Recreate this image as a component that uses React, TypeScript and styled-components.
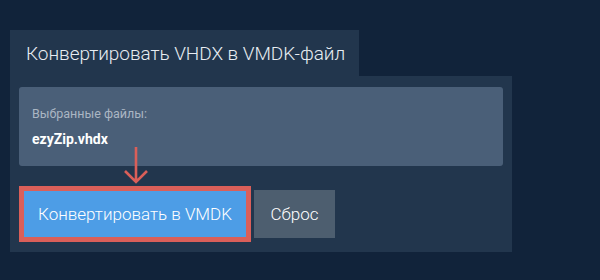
import React from 'react';
import styled, { createGlobalStyle } from 'styled-components';

const GlobalStyle = createGlobalStyle`
  body {
    margin: 0;
    background: #11233a;
    font-family: Roboto, "Noto Sans", sans-serif;
  }
`;

const Page = styled.div`
  padding: 30px 10px 0;
  height: 250px;
`;

const Tab = styled.div`
  display: inline-flex;
  align-items: center;
  height: 46px;
  padding: 0 14px 0 16px;
  background: #22364d;
  color: #e8edf2;
  font-size: 19px;
  font-weight: 300;
  letter-spacing: -0.05px;
`;

const Panel = styled.div`
  width: 484px;
  padding: 11px 9px 10px;
  background: #22364d;
`;

const FileBox = styled.div`
  height: 79px;
  box-sizing: border-box;
  padding: 19px 13px 0;
  background: #4a5f78;
  border-radius: 3px;
`;

const Label = styled.div`
  font-size: 12.5px;
  color: #aab6c3;
`;

const FileName = styled.div`
  margin-top: 10px;
  font-size: 14px;
  font-weight: 700;
  color: #ffffff;
`;

const Actions = styled.div`
  position: relative;
  display: flex;
  align-items: center;
  gap: 3px;
  margin-top: 20px;
`;

const Arrow = styled.svg`
  position: absolute;
  left: 104px;
  top: -39px;
`;

const Button = styled.button<{ $primary?: boolean }>`
  box-sizing: border-box;
  border: ${(p) => (p.$primary ? '5px solid #da5f59' : 'none')};
  background: ${(p) => (p.$primary ? '#4d9de6' : '#4d5e6f')};
  color: #ffffff;
  font-family: inherit;
  font-size: 17px;
  font-weight: 300;
  height: ${(p) => (p.$primary ? '56px' : '48px')};
  width: ${(p) => (p.$primary ? '232px' : '81px')};
  padding: 0;
  cursor: pointer;
`;

export default function App() {
  return (
    <Page>
      <GlobalStyle />
      <Tab>Конвертировать VHDX в VMDK-файл</Tab>
      <Panel>
        <FileBox>
          <Label>Выбранные файлы:</Label>
          <FileName>ezyZip.vhdx</FileName>
        </FileBox>
        <Actions>
          <Arrow width="26" height="37" viewBox="0 0 26 37">
            <path
              d="M13 0 V34 M2 24 L13 35 L24 24"
              fill="none"
              stroke="#da5f59"
              strokeWidth="2.6"
            />
          </Arrow>
          <Button $primary>Конвертировать в VMDK</Button>
          <Button>Сброс</Button>
        </Actions>
      </Panel>
    </Page>
  );
}
